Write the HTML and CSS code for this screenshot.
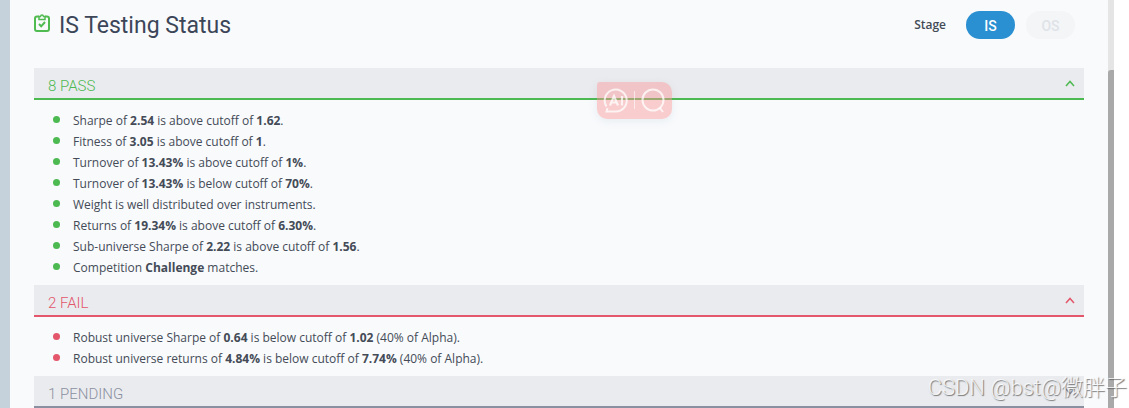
FILE: index.html
```html
<!DOCTYPE html>
<html lang="en">
<head>
<meta charset="utf-8">
<title>IS Testing Status</title>
<link rel="stylesheet" href="styles.css">
</head>
<body>
<div class="page">
  <main class="panel">
    <header class="top">
      <svg class="clip" viewBox="0 0 16 18" fill="none" stroke="#50bb50" stroke-width="2" aria-hidden="true">
        <path d="M5 2.500H3Q1 2.500 1 4.500V15Q1 17 3 17H13Q15 17 15 15V4.500Q15 2.500 13 2.500H11"/>
        <path d="M5 2.500V5.500H11V2.500L9.500 2.500Q9.300 1 8 1Q6.700 1 6.500 2.500Z" stroke-width="1.500"/>
        <path d="M5 10L7.200 12.300L11 8" stroke-width="2"/>
      </svg>
      <h1 class="title">IS Testing Status</h1>
      <div class="stage">
        <span class="stage-label">Stage</span>
        <button class="pill pill-on" type="button">IS</button>
        <button class="pill" type="button" disabled>OS</button>
      </div>
    </header>

    <section class="group pass">
      <button class="group-head" type="button"><span>8 PASS</span>
        <svg class="caret" viewBox="0 0 10 7" aria-hidden="true"><path d="M1 6L5 1.500L9 6"/></svg></button>
      <ul class="list">
        <li>Sharpe of <b>2.54</b> is above cutoff of <b>1.62</b>.</li>
        <li>Fitness of <b>3.05</b> is above cutoff of <b>1</b>.</li>
        <li>Turnover of <b>13.43%</b> is above cutoff of <b>1%</b>.</li>
        <li>Turnover of <b>13.43%</b> is below cutoff of <b>70%</b>.</li>
        <li>Weight is well distributed over instruments.</li>
        <li>Returns of <b>19.34%</b> is above cutoff of <b>6.30%</b>.</li>
        <li>Sub-universe Sharpe of <b>2.22</b> is above cutoff of <b>1.56</b>.</li>
        <li>Competition <b>Challenge</b> matches.</li>
      </ul>
    </section>

    <section class="group fail">
      <button class="group-head" type="button"><span>2 FAIL</span>
        <svg class="caret" viewBox="0 0 10 7" aria-hidden="true"><path d="M1 6L5 1.500L9 6"/></svg></button>
      <ul class="list">
        <li>Robust universe Sharpe of <b>0.64</b> is below cutoff of <b>1.02</b> (40% of Alpha).</li>
        <li>Robust universe returns of <b>4.84%</b> is below cutoff of <b>7.74%</b> (40% of Alpha).</li>
      </ul>
    </section>

    <section class="group pending">
      <button class="group-head" type="button"><span>1 PENDING</span>
        <svg class="caret" viewBox="0 0 10 7" aria-hidden="true"><path d="M1 1L5 5.500L9 1"/></svg></button>
    </section>
  </main>
  <div class="track"><div class="thumb"></div></div>

  <div class="ai-badge">
    <svg class="ai-art" viewBox="0 0 75 38" fill="none" stroke="#fff" stroke-opacity=".75" stroke-width="2" aria-hidden="true">
      <path d="M9.500 24.500A11 11 0 1 1 19 29.500H9.500L10.500 26"/>
      <path d="M13 23.500L17 14L21 23.500M14.500 20.500H19.500M25 14V23.500" stroke-width="2.200"/>
      <path d="M37.500 9V27" stroke-width="1" stroke-opacity=".6"/>
      <circle cx="56" cy="18" r="10.500"/>
      <path d="M62.500 25.500L66 30"/>
    </svg>
  </div>
  <div class="watermark">CSDN @bst@微胖子</div>
</div>
</body>
</html>
```

FILE: styles.css
```css
* { box-sizing: border-box; }

body {
  margin: 0;
  background: #fff;
  color: #444b57;
  font-family: "Open Sans", sans-serif;
  font-size: 12px;
}

.page {
  position: relative;
  display: flex;
  height: 100vh;
  padding-right: 15px;
  overflow: hidden;
}

.panel {
  flex: 1;
  padding: 0 24px;
  border-left: 10px solid #c5d2dc;
  background: #f8fafc;
}

.top {
  display: flex;
  align-items: center;
  height: 49px;
  margin-bottom: 19px;
}

.clip {
  width: 16px;
  height: 18px;
  margin: 0 9px 3px 0;
}

.title {
  margin: 0;
  padding-top: 2px;
  color: #3c4658;
  font: 400 23px/32px Roboto, sans-serif;
}

.stage {
  display: flex;
  align-items: center;
  gap: 11px;
  margin-left: auto;
  padding-right: 9px;
}

.stage-label {
  margin-right: 9px;
  font-weight: 600;
}

.pill {
  width: 49px;
  height: 28px;
  padding: 2px 0 0;
  border: 0;
  border-radius: 14px;
  background: #f3f5f7;
  color: #dfe3e8;
  font: 500 14px/20px Roboto, sans-serif;
}

.pill-on {
  background: #2a90d2;
  color: #fff;
}

.pass { --tone: #4db951; }
.fail { --tone: #e3566b; }
.pending { --tone: #8b90a1; }

.group-head {
  display: flex;
  align-items: center;
  justify-content: space-between;
  width: 100%;
  height: 32px;
  padding: 5px 9px 0 14px;
  border: 0;
  border-bottom: 2px solid var(--tone);
  background: #eaebee;
  color: var(--tone);
  font: 300 15px/20px Roboto, sans-serif;
}

.caret {
  width: 10px;
  height: 7px;
  margin-bottom: 5px;
  fill: none;
  stroke: var(--tone);
  stroke-width: 1.5;
}

.list {
  margin: 0;
  padding: 10px 0 7px 19px;
  list-style: none;
}

.list li {
  display: flex;
  align-items: center;
  white-space: pre;
  line-height: 21px;
}

.list li::before {
  content: "";
  width: 7px;
  height: 7px;
  margin: 0 13px 3px 0;
  border-radius: 50%;
  background: var(--tone);
}

.track {
  width: 6px;
  padding-top: 70px;
  background: #e5e5e5;
}

.thumb {
  height: 100%;
  border-radius: 3px 0 0 0;
  background: #a9a9a9;
}

.ai-badge {
  position: absolute;
  top: 82px;
  left: 597px;
  width: 75px;
  height: 37px;
  border-radius: 3px 10px 10px 10px;
  background: rgba(250, 150, 150, 0.45);
  box-shadow: 0 2px 8px rgba(120, 140, 160, 0.12);
}

.ai-art {
  display: block;
  width: 75px;
  height: 38px;
}

.watermark {
  position: absolute;
  right: 2px;
  bottom: 6px;
  color: rgba(255, 255, 255, 0.8);
  font: 300 22px/28px Roboto, "Noto Sans CJK SC", sans-serif;
  text-shadow: 1px 1px 1px rgba(90, 90, 90, 0.8);
}
```
